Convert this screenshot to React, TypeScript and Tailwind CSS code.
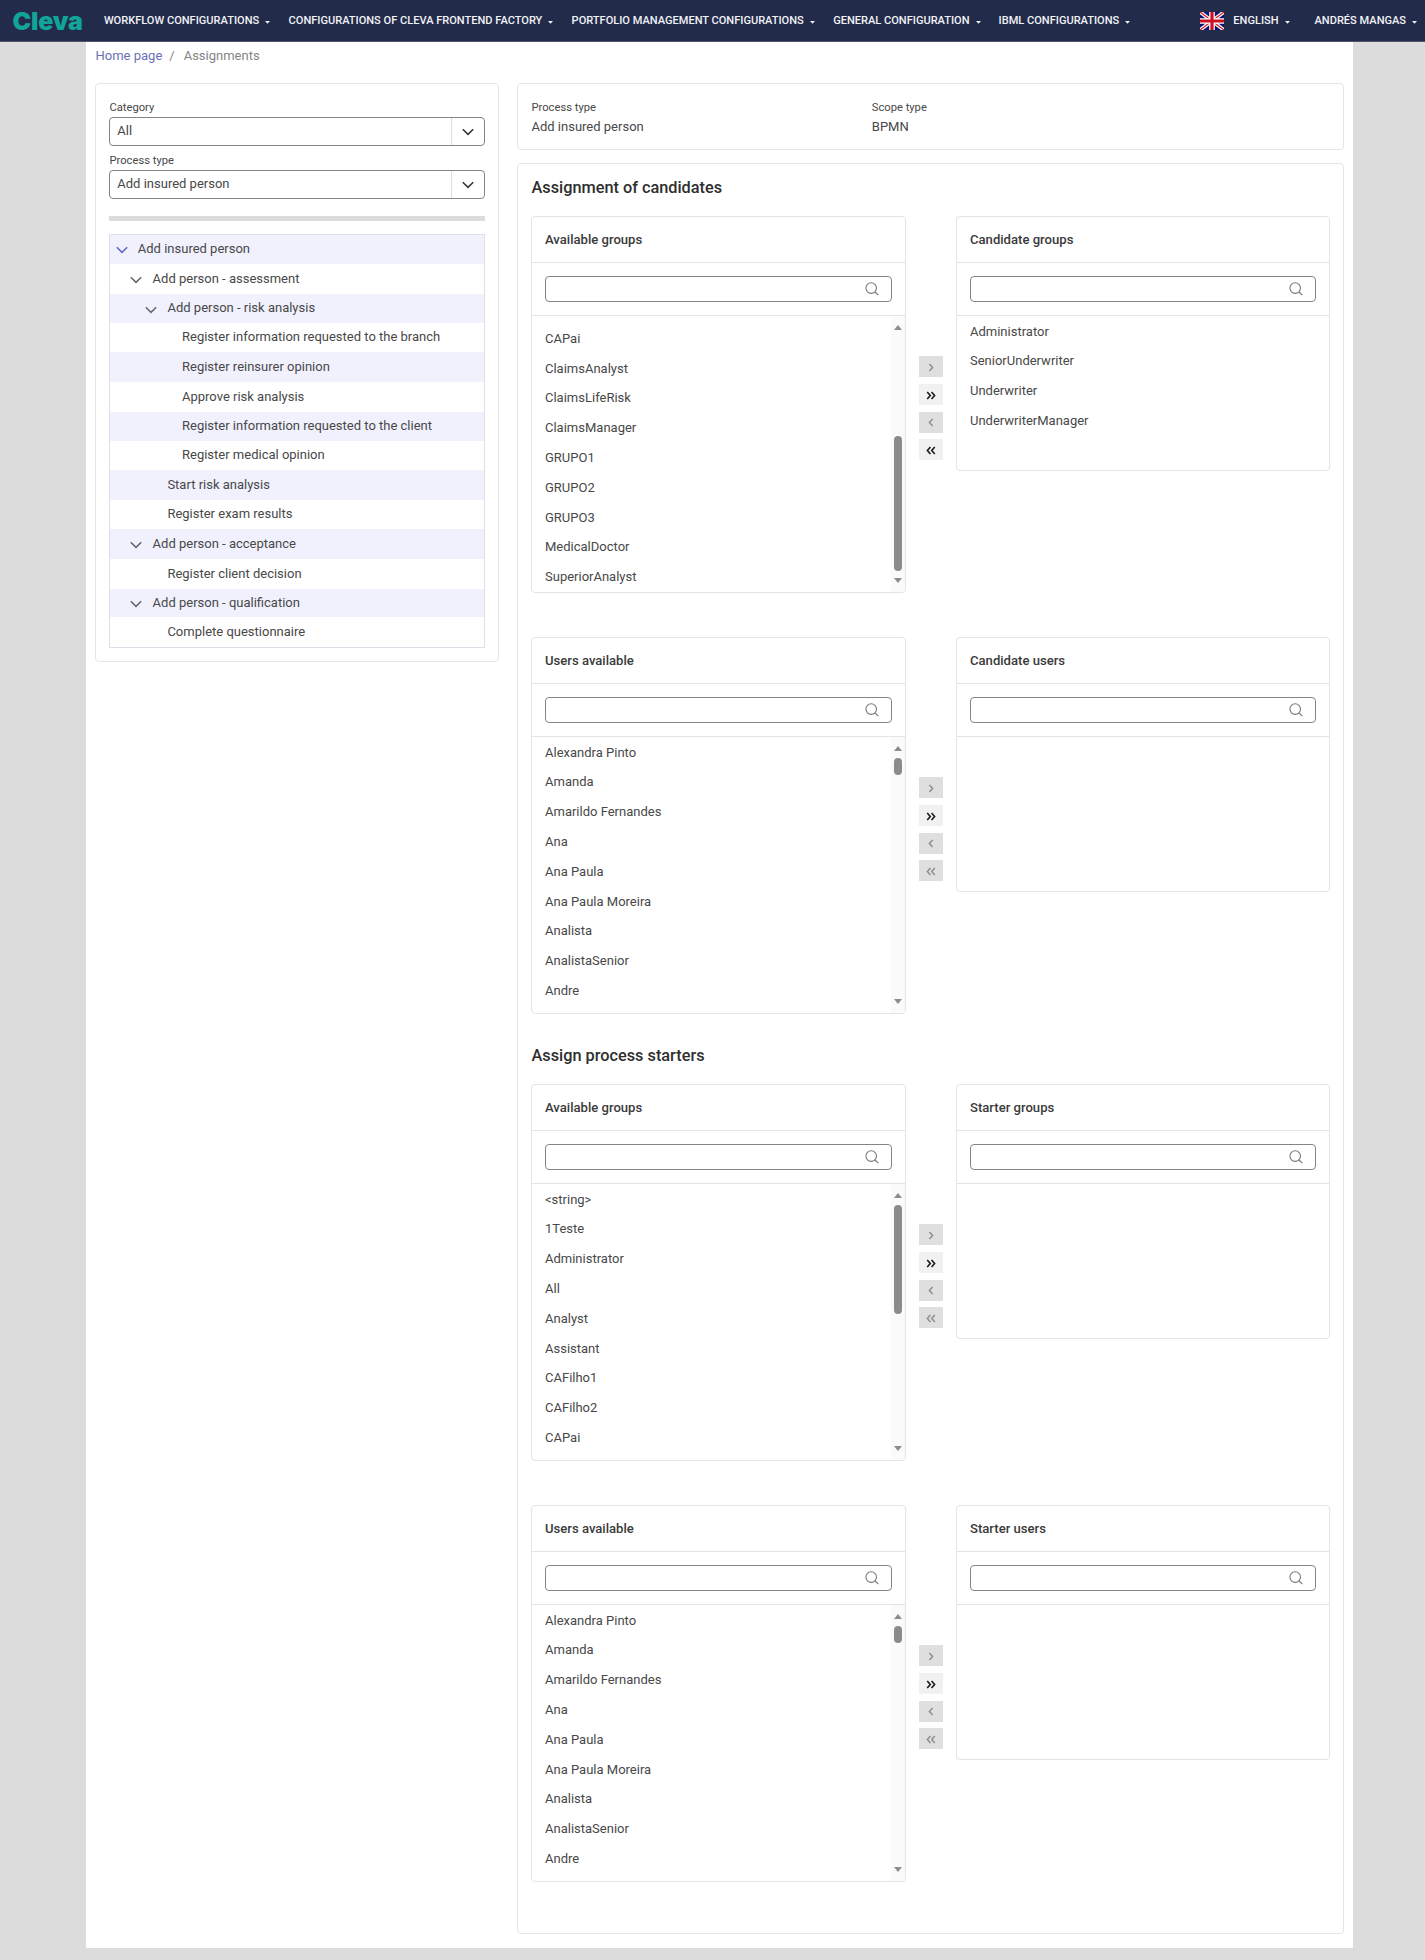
type IconProps = { className?: string };

const ChevronDown = ({ className = "" }: IconProps) => (
  <svg viewBox="0 0 12 8" className={`h-2 w-3 ${className}`} fill="none" stroke="currentColor" strokeWidth="1.5">
    <path d="M0.8 1.2 6 6.4 11.2 1.2" />
  </svg>
);

const SearchIcon = () => (
  <svg viewBox="0 0 14 14" className="h-3.5 w-3.5 text-[#777]" fill="none" stroke="currentColor" strokeWidth="1.1">
    <circle cx="6.2" cy="6.1" r="5.3" />
    <path d="M10 10 13.4 13.2" />
  </svg>
);

const Flag = () => (
  <svg viewBox="0 0 24 18" className="mt-px h-[18px] w-6">
    <rect width="24" height="18" fill="#0b1273" />
    <path d="M0 0 24 18M24 0 0 18" stroke="#fff" strokeWidth="3.6" />
    <path d="M0 0 24 18M24 0 0 18" stroke="#d0202c" strokeWidth="1.3" />
    <path d="M12 0V18M0 9H24" stroke="#fff" strokeWidth="5.6" />
    <path d="M12 0V18M0 9H24" stroke="#cc1020" strokeWidth="3.2" />
  </svg>
);

const Caret = () => (
  <svg viewBox="0 0 5 3" className="mt-[3px] ml-1.5 h-[3px] w-[5px] shrink-0" fill="currentColor">
    <path d="M0 0H5L2.5 2.8Z" />
  </svg>
);

const NAV = [
  { label: "WORKFLOW CONFIGURATIONS", width: "w-[184.7px]" },
  { label: "CONFIGURATIONS OF CLEVA FRONTEND FACTORY", width: "w-[283px]" },
  { label: "PORTFOLIO MANAGEMENT CONFIGURATIONS", width: "w-[261.6px]" },
  { label: "GENERAL CONFIGURATION", width: "w-[165.4px]" },
  { label: "IBML CONFIGURATIONS", width: "w-[201.8px]" },
];

function Header() {
  return (
    <header className="flex h-[42px] items-center border-b border-[#4c5470] bg-[#222b4a] text-[11.05px] font-medium whitespace-nowrap text-[#f1f2f6]">
      <div className="w-[103.9px] pt-0.5 pl-[12.5px] font-['Inter'] text-[25px] leading-none font-black tracking-[-0.2px] text-[#12a399]">
        Cleva
      </div>
      {NAV.map((n) => (
        <div key={n.label} className={`flex shrink-0 items-center pt-px ${n.width}`}>
          {n.label}
          <Caret />
        </div>
      ))}
      <Flag />
      <div className="ml-[9px] flex w-[81.2px] shrink-0 items-center pt-px">
        ENGLISH
        <Caret />
      </div>
      <div className="flex items-center pt-px">
        ANDRÉS MANGAS
        <Caret />
      </div>
    </header>
  );
}

function Select({ label, value }: { label: string; value: string }) {
  return (
    <div>
      <div className="h-[17px] pl-[0.5px] text-[11.2px] leading-[15px]">{label}</div>
      <div className="flex h-[29px] items-stretch rounded border border-[#858589]">
        <div className="flex-1 pl-[7.3px] leading-[26px]">{value}</div>
        <div className="flex w-[33px] items-center justify-center border-l border-[#dedede] text-[#333]">
          <ChevronDown />
        </div>
      </div>
    </div>
  );
}

const TREE = [
  { text: "Add insured person", pad: "pl-[5.5px]", h: "h-[29px]", open: true, active: true },
  { text: "Add person - assessment", pad: "pl-[20.3px]", h: "h-[30px]", open: true },
  { text: "Add person - risk analysis", pad: "pl-[35.2px]", h: "h-[29px]", open: true },
  { text: "Register information requested to the branch", pad: "pl-[72px]", h: "h-[29px]" },
  { text: "Register reinsurer opinion", pad: "pl-[72px]", h: "h-[30px]" },
  { text: "Approve risk analysis", pad: "pl-[72px]", h: "h-[30px]" },
  { text: "Register information requested to the client", pad: "pl-[72px]", h: "h-[29px]" },
  { text: "Register medical opinion", pad: "pl-[72px]", h: "h-[29px]" },
  { text: "Start risk analysis", pad: "pl-[57.4px]", h: "h-[30px]" },
  { text: "Register exam results", pad: "pl-[57.4px]", h: "h-[29px]" },
  { text: "Add person - acceptance", pad: "pl-[20.3px]", h: "h-[30px]", open: true },
  { text: "Register client decision", pad: "pl-[57.4px]", h: "h-[30px]" },
  { text: "Add person - qualification", pad: "pl-[20.3px]", h: "h-[28px]", open: true },
  { text: "Complete questionnaire", pad: "pl-[57.4px]", h: "h-[30px]" },
];

function Sidebar() {
  return (
    <aside className="h-[579px] w-[404px] rounded border border-[#e6e6e6] px-[13px] pt-4">
      <Select label="Category" value="All" />
      <div className="h-[7px]" />
      <Select label="Process type" value="Add insured person" />
      <div className="mt-[17px] h-[5px] bg-[#dcdcdc]" />
      <div className="mt-[13px] border border-[#dfdfea]">
        {TREE.map((n, i) => (
          <div
            key={n.text}
            className={`flex items-center pb-px ${n.pad} ${n.h} ${i % 2 === 0 ? "bg-[#f1f1fe]" : "bg-white"}`}
          >
            {n.open && (
              <ChevronDown className={n.active ? "mt-0.5 mr-[10.3px] text-[#5f63c4]" : "mt-[3px] mr-[10.3px] text-[#666]"} />
            )}
            {n.text}
          </div>
        ))}
      </div>
    </aside>
  );
}

type Scroll = { offset: string; thumb: string };

function Scrollbar({ offset, thumb }: Scroll) {
  return (
    <div className="flex w-[14px] flex-col items-center bg-[#fafafa] pt-[9px] pb-[9px]">
      <svg viewBox="0 0 8 5" className="h-[5px] w-2 shrink-0" fill="#8b8b8b">
        <path d="M0 5 4 0 8 5Z" />
      </svg>
      <div className={`w-2 shrink-0 rounded-full bg-[#8b8b8b] ${offset} ${thumb}`} />
      <svg viewBox="0 0 8 5" className="mt-auto h-[5px] w-2 shrink-0" fill="#8b8b8b">
        <path d="M0 0H8L4 5Z" />
      </svg>
    </div>
  );
}

function ListPanel(props: { title: string; items: string[]; size: string; inset?: string; scroll?: Scroll }) {
  const { title, items, size, inset = "pt-[0.7px]", scroll } = props;
  return (
    <section className={`flex flex-col overflow-hidden rounded border border-[#e4e4e4] ${size}`}>
      <h3 className="h-[46px] shrink-0 border-b border-[#e4e4e4] pl-[13px] text-[13.1px] leading-[46px] font-medium text-[#3a3a3a]">
        {title}
      </h3>
      <div className="flex h-[53px] shrink-0 items-center border-b border-[#e4e4e4] px-[13px]">
        <div className="flex h-[26px] flex-1 items-center justify-end rounded border border-[#858589] pr-3">
          <SearchIcon />
        </div>
      </div>
      <div className="flex min-h-0 flex-1">
        <ul className={`flex-1 overflow-hidden pl-[13px] ${inset}`}>
          {items.map((t) => (
            <li key={t} className="h-[29.8px] leading-[29.8px]">
              {t}
            </li>
          ))}
        </ul>
        {scroll && <Scrollbar {...scroll} />}
      </div>
    </section>
  );
}

const ARROWS = [
  "M3.2 1.2 6.8 5 3.2 8.8",
  "M0.8 1.2 4.2 5 0.8 8.8M5.6 1.2 9 5 5.6 8.8",
  "M6.8 1.2 3.2 5 6.8 8.8",
  "M4.4 1.2 1 5 4.4 8.8M9.2 1.2 5.8 5 9.2 8.8",
];

function MoveButtons({ enabled }: { enabled: number[] }) {
  return (
    <div className="mx-[13px] mt-[140px] flex w-6 flex-col gap-[6.8px]">
      {ARROWS.map((d, i) => {
        const on = enabled.includes(i);
        return (
          <button
            key={d}
            className={`flex h-[21px] w-6 items-center justify-center pt-[1.5px] ${on ? "bg-[#f1f1f1] text-[#1c1c1c]" : "bg-[#dfdfdf] text-[#8c8c8c]"}`}
          >
            <svg viewBox="0 0 10 10" className="h-[9px] w-[10px]" fill="none" stroke="currentColor" strokeWidth={on ? 1.8 : 1.6}>
              <path d={d} />
            </svg>
          </button>
        );
      })}
    </div>
  );
}

function DualList(props: {
  left: string;
  right: string;
  leftItems: string[];
  rightItems?: string[];
  inset?: string;
  scroll: Scroll;
  enabled: number[];
}) {
  return (
    <div className="flex h-[377px] items-start">
      <ListPanel
        title={props.left}
        items={props.leftItems}
        size="h-[377px] w-[375px]"
        inset={props.inset}
        scroll={props.scroll}
      />
      <MoveButtons enabled={props.enabled} />
      <ListPanel title={props.right} items={props.rightItems ?? []} size="h-[255px] w-[374px]" />
    </div>
  );
}

const USERS = [
  "Alexandra Pinto",
  "Amanda",
  "Amarildo Fernandes",
  "Ana",
  "Ana Paula",
  "Ana Paula Moreira",
  "Analista",
  "AnalistaSenior",
  "Andre",
];
const GROUPS_TOP = ["<string>", "1Teste", "Administrator", "All", "Analyst", "Assistant", "CAFilho1", "CAFilho2", "CAPai"];
const GROUPS_END = [
  "CAPai",
  "ClaimsAnalyst",
  "ClaimsLifeRisk",
  "ClaimsManager",
  "GRUPO1",
  "GRUPO2",
  "GRUPO3",
  "MedicalDoctor",
  "SuperiorAnalyst",
];
const USER_SCROLL = { offset: "mt-[7px]", thumb: "h-[17px]" };

function Field({ label, value }: { label: string; value: string }) {
  return (
    <div className="w-[340.3px]">
      <div className="text-[11.2px] leading-[15px]">{label}</div>
      <div className="mt-[3px] leading-[18px]">{value}</div>
    </div>
  );
}

export default function App() {
  return (
    <div className="h-[1960px] w-[1425px] overflow-hidden bg-[#dcdcdc] font-['Roboto',sans-serif] text-[13px] text-[#484848]">
      <Header />
      <main className="ml-[86px] h-[1906px] w-[1267px] bg-white pl-[9px]">
        <nav className="flex h-[41px] gap-[7px] pl-[0.5px] leading-[27px] text-[#848488]">
          <span className="text-[#6c70b5]">Home page</span>
          <span>/</span>
          <span className="ml-[2px]">Assignments</span>
        </nav>
        <div className="flex items-start gap-[18px]">
          <Sidebar />
          <div className="w-[827px]">
            <section className="flex h-[67px] rounded border border-[#e6e6e6] pt-4 pl-[13.5px]">
              <Field label="Process type" value="Add insured person" />
              <Field label="Scope type" value="BPMN" />
            </section>
            <section className="mt-[13px] h-[1771px] rounded border border-[#e6e6e6] pl-[13px]">
              <h2 className="h-[52px] pt-3 pl-[0.5px] text-[16.3px] leading-[23px] font-medium text-[#2e2e2e]">
                Assignment of candidates
              </h2>
              <DualList
                left="Available groups"
                right="Candidate groups"
                leftItems={GROUPS_END}
                rightItems={["Administrator", "SeniorUnderwriter", "Underwriter", "UnderwriterManager"]}
                inset="pt-[7.8px]"
                scroll={{ offset: "mt-[106px]", thumb: "h-[135px]" }}
                enabled={[1, 3]}
              />
              <div className="h-11" />
              <DualList left="Users available" right="Candidate users" leftItems={USERS} scroll={USER_SCROLL} enabled={[1]} />
              <h2 className="h-[70px] pt-[30px] pl-[0.5px] text-[16.3px] leading-[23px] font-medium text-[#2e2e2e]">
                Assign process starters
              </h2>
              <DualList
                left="Available groups"
                right="Starter groups"
                leftItems={GROUPS_TOP}
                scroll={{ offset: "mt-[7px]", thumb: "h-[109px]" }}
                enabled={[1]}
              />
              <div className="h-11" />
              <DualList left="Users available" right="Starter users" leftItems={USERS} scroll={USER_SCROLL} enabled={[1]} />
            </section>
          </div>
        </div>
      </main>
    </div>
  );
}
